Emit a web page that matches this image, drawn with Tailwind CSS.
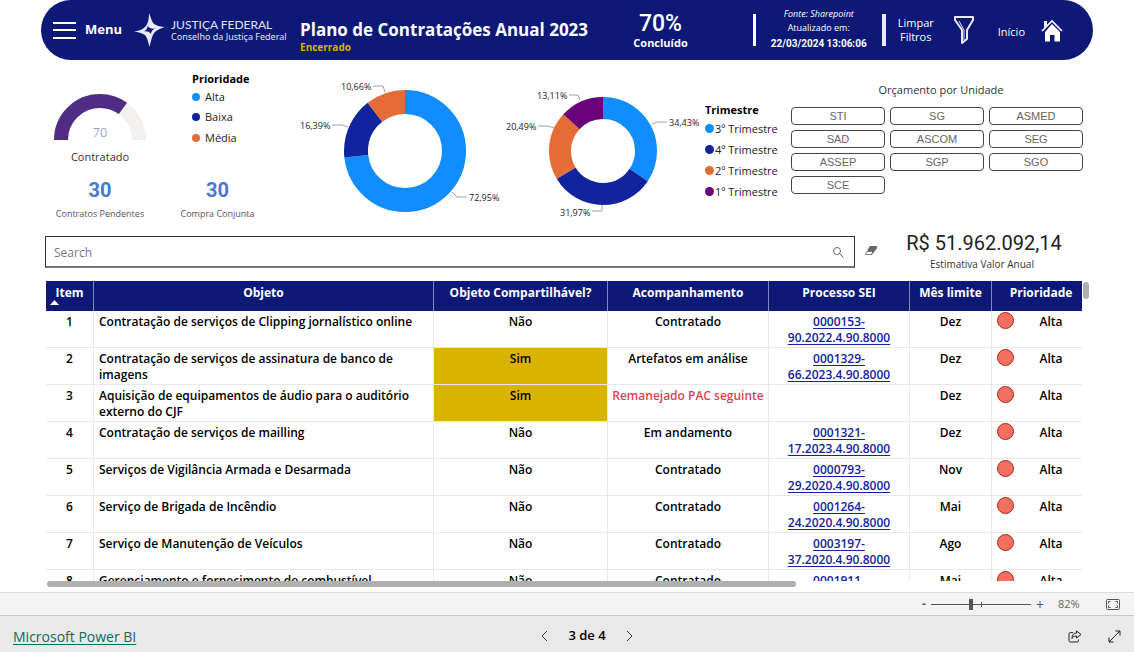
<!DOCTYPE html>
<html lang="pt-BR">
<head>
<meta charset="utf-8">
<title>Plano de Contratações Anual 2023</title>
<script src="https://cdn.jsdelivr.net/npm/@tailwindcss/browser@4"></script>
</head>
<body class="flex h-screen flex-col overflow-hidden bg-white font-['Open_Sans','Noto_Sans',sans-serif] text-black">

<header class="mx-[41px] flex h-[60px] shrink-0 items-center rounded-full bg-[#0d1877] pr-[30px] pl-3 text-white">
  <button class="flex items-center gap-2 text-[13px] font-bold">
    <svg class="h-5 w-6" viewBox="0 0 24 20" stroke="#fff" stroke-width="2"><path d="M0 3h23M0 10h23M0 18h23"/></svg>
    Menu
  </button>
  <svg class="ml-3 h-[34px] w-[31px] shrink-0" viewBox="0 0 31 34" fill="#e8eaf8">
    <path d="M15 0C17 5 18 9 20 11C23 13 27 14 31 14C27 15 23 17 21 19C18 22 17 28 15.500 34C14 28 13 24 11 22C8 20 4 19 0 18.500C4 18 8 17 11 14C14 11 15 6 15 0Z"/>
    <path d="M13.500 13C15 15 18 16 21 15.500C18 17 17 19 17 21C15 18.500 13 18 10 18.500C12.500 17 13.500 15.500 13.500 13Z" fill="#0d1877"/>
  </svg>
  <div class="ml-[6px] w-[129px] whitespace-nowrap text-[#e0e3f5]">
    <div class="font-[Lato,sans-serif] text-[12px] leading-[13px]">JUSTIÇA FEDERAL</div>
    <div class="font-['Noto_Sans',sans-serif] text-[9px] leading-[12px]">Conselho da Justiça Federal</div>
  </div>
  <div class="whitespace-nowrap font-bold">
    <h1 class="mt-3 text-[17px] leading-[22px]">Plano de Contratações Anual 2023</h1>
    <div class="text-[10px] leading-[12px] text-[#d9b200]">Encerrado</div>
  </div>
  <div class="flex-1"></div>
  <div class="mr-[65px] pt-1 text-center">
    <div class="font-[Roboto,sans-serif] text-[23px] leading-[22px] font-medium">70%</div>
    <div class="text-[11px] leading-[16px] font-bold">Concluído</div>
  </div>
  <div class="h-8 w-[3px] bg-white"></div>
  <div class="w-[126px] text-center text-[9px] leading-[14px] whitespace-nowrap">
    <div class="italic">Fonte: Sharepoint</div>
    <div>Atualizado em:</div>
    <div class="font-[Roboto,sans-serif] text-[10px] leading-[18px] font-bold">22/03/2024 13:06:06</div>
  </div>
  <div class="h-8 w-1 bg-[#e8eaf8]"></div>
  <button class="ml-3 flex items-center gap-5 text-[11px] leading-[14px]">
    <span class="w-9 text-center">Limpar Filtros</span>
    <svg class="h-7 w-5" viewBox="0 0 20 28" fill="none" stroke="#e8eaf8" stroke-width="2" stroke-linejoin="round"><path d="M1 1h18v3L13 14v9l-5 4V14L1 4z"/><path d="M5 5l5 9v10" stroke-width="1"/></svg>
  </button>
  <a href="#" class="ml-6 flex items-center gap-4 text-[11px]">
    <span class="pt-1">Início</span>
    <svg class="h-[23px] w-[22px]" viewBox="0 0 22 23" fill="#fff"><path d="M3 2h3v4L3 9zM11 5l8 8v9.500h-5.500v-6.500h-4.500v6.500H4V13z"/><path d="M1 12L11 2l10 10" fill="none" stroke="#fff" stroke-width="1.600"/></svg>
  </a>
</header>

<main class="flex min-h-0 flex-1 flex-col">
  <section class="flex h-[172px] shrink-0 pr-[51px] pl-[45px]">
    <div class="flex text-center text-[#333]">
      <div class="flex w-[110px] flex-col items-center">
        <svg class="mt-[33px] h-[47px] w-[92px]" viewBox="0 0 92 47" fill="none" stroke-width="14">
          <path d="M7 47a39 39 0 0 1 78 0" stroke="#f2f1f0"/>
          <path d="M7 47a39 39 0 0 1 78 0" stroke="#4f2d84" pathLength="100" stroke-dasharray="70 100"/>
          <text x="46" y="44" text-anchor="middle" fill="#7e93cb" stroke="none" class="font-[Roboto,sans-serif] text-[13px] font-light">70</text>
        </svg>
        <div class="mt-2 text-[11px] leading-[18px]">Contratado</div>
        <div class="mt-3 font-[Roboto,sans-serif] text-[20px] leading-[24px] font-bold text-[#4878cf]">30</div>
        <div class="mt-1 text-[9px] leading-[16px] whitespace-nowrap text-[#555]">Contratos Pendentes</div>
      </div>
      <div class="flex w-[125px] flex-col items-center">
        <ul class="mt-[11px] h-[95px] w-[51px] text-left text-[11px] leading-[20px] text-[#222]">
          <li class="leading-[16px] font-bold whitespace-nowrap text-black">Prioridade</li>
          <li class="flex items-center gap-[5px]"><i class="size-2 rounded-full bg-[#118dff]"></i>Alta</li>
          <li class="flex items-center gap-[5px]"><i class="size-2 rounded-full bg-[#12239e]"></i>Baixa</li>
          <li class="flex items-center gap-[5px] leading-[22px]"><i class="size-2 rounded-full bg-[#e66c37]"></i>Média</li>
        </ul>
        <div class="mt-3 font-[Roboto,sans-serif] text-[20px] leading-[24px] font-bold text-[#4878cf]">30</div>
        <div class="mt-1 text-[9px] leading-[16px] whitespace-nowrap text-[#555]">Compra Conjunta</div>
      </div>
    </div>

    <svg class="mt-[15px] ml-[10px] h-[150px] w-[210px] shrink-0" viewBox="0 0 210 150" fill="none">
      <g transform="rotate(-90 115 76)" stroke-width="24">
        <circle cx="115" cy="76" r="49" stroke="#118dff" pathLength="100" stroke-dasharray="73.250 100"/>
        <circle cx="115" cy="76" r="49" stroke="#12239e" pathLength="100" stroke-dasharray="16.250 100" stroke-dashoffset="-73.250"/>
        <circle cx="115" cy="76" r="49" stroke="#e66c37" pathLength="100" stroke-dasharray="10.500 100" stroke-dashoffset="-89.500"/>
      </g>
      <path d="M83 11h10l2 6M42 50h10l6 2M162 117l5 5h10" stroke="#a0a0a0"/>
      <g fill="#222" class="text-[9px]">
        <text x="51" y="15">10,66%</text><text x="10" y="54">16,39%</text><text x="179" y="126">72,95%</text>
      </g>
    </svg>

    <svg class="mt-[15px] h-[150px] w-[200px] shrink-0" viewBox="1 0 200 150" fill="none">
      <g transform="rotate(-90 104 76)" stroke-width="22">
        <circle cx="104" cy="76" r="43" stroke="#118dff" pathLength="100" stroke-dasharray="34.430 100"/>
        <circle cx="104" cy="76" r="43" stroke="#12239e" pathLength="100" stroke-dasharray="31.970 100" stroke-dashoffset="-34.430"/>
        <circle cx="104" cy="76" r="43" stroke="#e66c37" pathLength="100" stroke-dasharray="20.490 100" stroke-dashoffset="-66.400"/>
        <circle cx="104" cy="76" r="43" stroke="#6b007b" pathLength="100" stroke-dasharray="13.110 100" stroke-dashoffset="-86.890"/>
      </g>
      <path d="M70 20h9l2 5M39 51h10l6 2M153 49l5-2h10M93 136h10v-6" stroke="#a0a0a0"/>
      <g fill="#222" class="text-[9px]">
        <text x="38" y="24">13,11%</text><text x="7" y="55">20,49%</text><text x="170" y="51">34,43%</text><text x="61" y="141">31,97%</text>
      </g>
    </svg>

    <ul class="mt-[42px] ml-[5px] flex-1 text-[11px] leading-[21px] whitespace-nowrap text-[#222]">
      <li class="leading-[16px] font-bold text-black">Trimestre</li>
      <li class="flex items-center gap-px"><i class="size-[9px] rounded-full bg-[#118dff]"></i>3º Trimestre</li>
      <li class="flex items-center gap-px"><i class="size-[9px] rounded-full bg-[#12239e]"></i>4º Trimestre</li>
      <li class="flex items-center gap-px"><i class="size-[9px] rounded-full bg-[#e66c37]"></i>2º Trimestre</li>
      <li class="flex items-center gap-px"><i class="size-[9px] rounded-full bg-[#6b007b]"></i>1º Trimestre</li>
    </ul>

    <div class="mt-[21px] w-[292px]">
      <h2 class="pl-2 text-center text-[11px] leading-[18px] text-[#333]">Orçamento por Unidade</h2>
      <div class="mt-2 grid grid-cols-3 gap-[5px] font-['Liberation_Sans',sans-serif] text-[11px] leading-[14px] text-[#666] [&>button]:h-[18px] [&>button]:rounded-[4px] [&>button]:border [&>button]:border-[#444]">
        <button>STI</button><button>SG</button><button>ASMED</button>
        <button>SAD</button><button>ASCOM</button><button>SEG</button>
        <button>ASSEP</button><button>SGP</button><button>SGO</button>
        <button>SCE</button>
      </div>
    </div>
  </section>

  <section class="flex h-[49px] shrink-0 pt-1 pr-[52px] pl-[45px]">
    <label class="flex h-8 flex-1 items-center border border-b-2 border-[#333] border-b-[#777] pr-2">
      <input type="text" placeholder="Search" aria-label="Search" class="h-full flex-1 pt-[2px] pl-2 text-[12px] outline-none placeholder:text-[#777]">
      <svg class="size-4" viewBox="0 0 16 16" fill="none" stroke="#666"><circle cx="7" cy="7" r="3.500"/><path d="M9.500 9.500l4 4"/></svg>
    </label>
    <button aria-label="Limpar" class="mr-[5px] ml-[10px] h-[29px]">
      <svg class="h-3 w-3" viewBox="0 0 12 12"><path d="M5 1h6.500L8 6.500H1.800z" fill="#666"/><path d="M1.800 6.500H8L6.500 9.500H.5zM6.500 9.500L11.500 3.500V1L8 6.500z" fill="#fff" stroke="#666" stroke-width=".8"/><path d="M5 1h6.500v2.500L8 8V6.500L3.500 4z" fill="#666"/></svg>
    </button>
    <div class="w-[200px] text-center whitespace-nowrap">
      <div class="pl-1 font-[Roboto,sans-serif] text-[20px] leading-[14px] text-[#222]">R$ 51.962.092,14</div>
      <div class="mt-[6px] text-[10px] leading-[16px] text-[#333]">Estimativa Valor Anual</div>
    </div>
  </section>

  <section class="flex min-h-0 flex-1 pr-[45px] pl-[46px]">
    <div class="min-h-0 flex-1 overflow-hidden">
      <table class="w-full table-fixed border-separate border-spacing-0 text-center text-[12px] leading-[16px] font-semibold [&_td]:h-[37px] [&_td]:border-r [&_td]:border-b [&_td]:border-[#e8e8e8] [&_td]:pt-[3px] [&_td]:align-top [&_td:last-child]:border-r-0 [&_td:last-child]:pt-px [&_td:nth-child(2)]:pr-2 [&_td:nth-child(2)]:pl-[5px] [&_td:nth-child(2)]:text-left [&_a]:text-[#12239e] [&_a]:underline [&_a]:underline-offset-2 [&_th]:h-[30px] [&_th]:border-r [&_th]:border-[#8087c0] [&_th]:bg-[#0d1877] [&_th]:pt-1 [&_th]:align-top [&_th]:font-bold [&_th]:text-white [&_th]:whitespace-nowrap [&_th:last-child]:border-r-0">
        <colgroup><col class="w-[48px]"><col><col class="w-[174px]"><col class="w-[161px]"><col class="w-[141px]"><col class="w-[82px]"><col class="w-[90px]"></colgroup>
        <thead>
          <tr>
            <th>Item<svg class="-mt-px ml-1 h-[5px] w-[9px]" viewBox="0 0 9 5" fill="#fff"><path d="M0 5L4.500 0 9 5z"/></svg></th>
            <th>Objeto</th><th>Objeto Compartilhável?</th><th>Acompanhamento</th><th>Processo SEI</th><th>Mês limite</th><th class="pl-2">Prioridade</th>
          </tr>
        </thead>
        <tbody>
          <tr><td>1</td><td>Contratação de serviços de Clipping jornalístico online</td><td>Não</td><td>Contratado</td><td><a href="#">0000153-<br>90.2022.4.90.8000</a></td><td>Dez</td>
            <td><div class="flex pl-[5px]"><i class="size-[17px] rounded-full border border-[#a82a20] bg-[#f2705f]"></i><span class="flex-1 pt-[2px] pl-[6px]">Alta</span></div></td></tr>
          <tr><td>2</td><td>Contratação de serviços de assinatura de banco de imagens</td><td class="bg-[#d9b300]">Sim</td><td>Artefatos em análise</td><td><a href="#">0001329-<br>66.2023.4.90.8000</a></td><td>Dez</td>
            <td><div class="flex pl-[5px]"><i class="size-[17px] rounded-full border border-[#a82a20] bg-[#f2705f]"></i><span class="flex-1 pt-[2px] pl-[6px]">Alta</span></div></td></tr>
          <tr><td>3</td><td>Aquisição de equipamentos de áudio para o auditório externo do CJF</td><td class="bg-[#d9b300]">Sim</td><td class="whitespace-nowrap text-[#d64550]">Remanejado PAC seguinte</td><td></td><td>Dez</td>
            <td><div class="flex pl-[5px]"><i class="size-[17px] rounded-full border border-[#a82a20] bg-[#f2705f]"></i><span class="flex-1 pt-[2px] pl-[6px]">Alta</span></div></td></tr>
          <tr><td>4</td><td>Contratação de serviços de mailling</td><td>Não</td><td>Em andamento</td><td><a href="#">0001321-<br>17.2023.4.90.8000</a></td><td>Dez</td>
            <td><div class="flex pl-[5px]"><i class="size-[17px] rounded-full border border-[#a82a20] bg-[#f2705f]"></i><span class="flex-1 pt-[2px] pl-[6px]">Alta</span></div></td></tr>
          <tr><td>5</td><td>Serviços de Vigilância Armada e Desarmada</td><td>Não</td><td>Contratado</td><td><a href="#">0000793-<br>29.2020.4.90.8000</a></td><td>Nov</td>
            <td><div class="flex pl-[5px]"><i class="size-[17px] rounded-full border border-[#a82a20] bg-[#f2705f]"></i><span class="flex-1 pt-[2px] pl-[6px]">Alta</span></div></td></tr>
          <tr><td>6</td><td>Serviço de Brigada de Incêndio</td><td>Não</td><td>Contratado</td><td><a href="#">0001264-<br>24.2020.4.90.8000</a></td><td>Mai</td>
            <td><div class="flex pl-[5px]"><i class="size-[17px] rounded-full border border-[#a82a20] bg-[#f2705f]"></i><span class="flex-1 pt-[2px] pl-[6px]">Alta</span></div></td></tr>
          <tr><td>7</td><td>Serviço de Manutenção de Veículos</td><td>Não</td><td>Contratado</td><td><a href="#">0003197-<br>37.2020.4.90.8000</a></td><td>Ago</td>
            <td><div class="flex pl-[5px]"><i class="size-[17px] rounded-full border border-[#a82a20] bg-[#f2705f]"></i><span class="flex-1 pt-[2px] pl-[6px]">Alta</span></div></td></tr>
          <tr><td>8</td><td>Gerenciamento e fornecimento de combustível</td><td>Não</td><td>Contratado</td><td><a href="#">0001911-</a></td><td>Mai</td>
            <td><div class="flex pl-[5px]"><i class="size-[17px] rounded-full border border-[#a82a20] bg-[#f2705f]"></i><span class="flex-1 pt-[2px] pl-[6px]">Alta</span></div></td></tr>
        </tbody>
      </table>
    </div>
    <div class="mt-px ml-px h-[17px] w-[6px] rounded-full bg-[#b0b0ae]"></div>
  </section>
  <div class="mr-[52px] mb-[5px] ml-[47px] h-[6px] shrink-0"><div class="h-full w-[72.400%] rounded-full bg-[#b0b0ae]"></div></div>
</main>

<div class="flex h-[23px] shrink-0 items-center justify-end border-t border-[#dcdcdc] bg-[#f4f4f4] pr-[14px] text-[12px] text-[#555]">
  <button aria-label="Reduzir" class="font-bold">-</button>
  <div class="relative mx-[5px] flex h-3 w-[100px] items-center">
    <input type="range" min="10" max="190" value="82" aria-label="Zoom" class="h-px w-full appearance-none bg-[#555] [&::-webkit-slider-thumb]:h-[11px] [&::-webkit-slider-thumb]:w-1 [&::-webkit-slider-thumb]:appearance-none [&::-webkit-slider-thumb]:bg-[#555]">
    <i class="absolute top-1 left-1/2 h-[5px] w-px bg-[#555]"></i>
  </div>
  <button aria-label="Ampliar" class="text-[14px]">+</button>
  <span class="ml-[14px] w-7 text-[11px] text-[#666]">82%</span>
  <button aria-label="Ajustar à página" class="ml-5"><svg class="h-[11px] w-[14px]" viewBox="0 0 14 11" fill="none" stroke="#555"><rect x=".5" y=".5" width="13" height="10" rx="1"/><path d="M2.500 4.500v-2h2M9.500 2.500h2v2M11.500 6.500v2h-2M4.500 8.500h-2v-2"/></svg></button>
</div>

<footer class="grid h-[37px] shrink-0 grid-cols-3 items-center border-t border-[#c8c8c8] bg-[#e9e9e9] px-[13px] pt-1">
  <a href="#" class="justify-self-start text-[14px] whitespace-nowrap text-[#106a5e] underline underline-offset-2">Microsoft Power BI</a>
  <nav class="flex items-center justify-center gap-5 pl-10 text-[13px] font-semibold">
    <button aria-label="Página anterior"><svg class="h-3 w-[7px]" viewBox="0 0 7 12" fill="none" stroke="#333"><path d="M6 1L1 6l5 5"/></svg></button>
    <span>3 de 4</span>
    <button aria-label="Próxima página"><svg class="h-3 w-[7px]" viewBox="0 0 7 12" fill="none" stroke="#333"><path d="M1 1l5 5-5 5"/></svg></button>
  </nav>
  <div class="flex items-center justify-end gap-[26px]">
    <button aria-label="Compartilhar"><svg class="h-[13px] w-[14px]" viewBox="0 0 14 13" fill="none" stroke="#222"><path d="M5 2.500H2.500a1.500 1.500 0 0 0-1.500 1.500v6.500A1.500 1.500 0 0 0 2.500 12h6.500a1.500 1.500 0 0 0 1.500-1.500V9.500"/><path d="M8.500 1l4.500 3.500-4.500 3.500V6C6 6 5 6.500 4 8.500 4 5 5.500 3 8.500 3z" stroke-linejoin="round"/></svg></button>
    <button aria-label="Tela cheia"><svg class="size-[13px]" viewBox="0 0 13 13" fill="none" stroke="#222"><path d="M1 12L12 1M7.500 1H12v4.500M1 7.500V12h4.500"/></svg></button>
  </div>
</footer>
</body>
</html>
